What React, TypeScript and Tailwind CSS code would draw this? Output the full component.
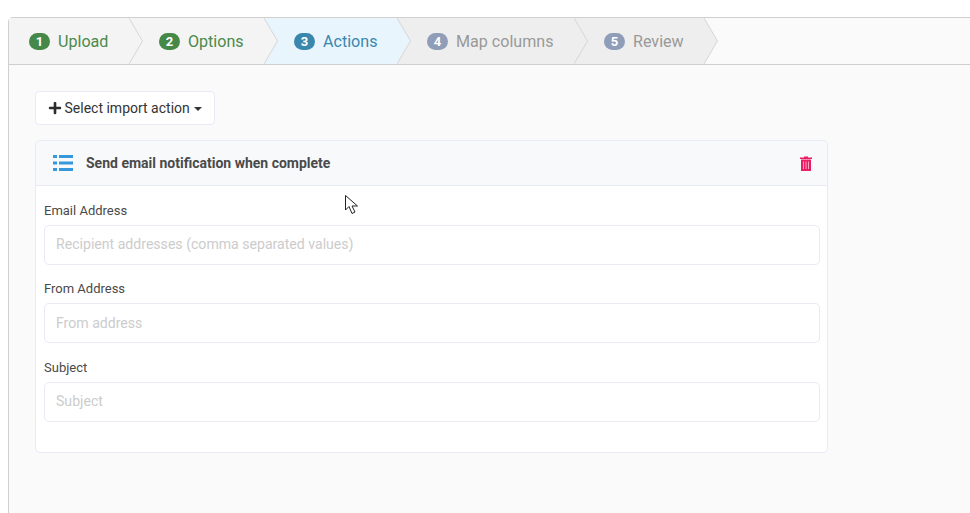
import { FaPlus } from "react-icons/fa";

const steps = [
  { n: 1, label: "Upload", width: "w-[120px]", pad: "pl-5", bg: "bg-[#f4f4f4]", fill: "#f4f4f4", text: "text-[#4b8a4b]", badge: "bg-[#468847]", z: "z-50" },
  { n: 2, label: "Options", width: "w-[135px]", pad: "pl-[30px]", bg: "bg-[#f4f4f4]", fill: "#f4f4f4", text: "text-[#4b8a4b]", badge: "bg-[#468847]", z: "z-40" },
  { n: 3, label: "Actions", width: "w-[133px]", pad: "pl-[30px]", bg: "bg-[#e9f5fd]", fill: "#e9f5fd", text: "text-[#3a87ad]", badge: "bg-[#3a87ad]", z: "z-30" },
  { n: 4, label: "Map columns", width: "w-[177px]", pad: "pl-[30px]", bg: "bg-[#eeeeee]", fill: "#eeeeee", text: "text-[#999999]", badge: "bg-[#8f9db8]", z: "z-20" },
  { n: 5, label: "Review", width: "w-[130px]", pad: "pl-[30px]", bg: "bg-[#eeeeee]", fill: "#eeeeee", text: "text-[#999999]", badge: "bg-[#8f9db8]", z: "z-10" },
];

const fields = [
  { label: "Email Address", placeholder: "Recipient addresses (comma separated values)" },
  { label: "From Address", placeholder: "From address" },
  { label: "Subject", placeholder: "Subject" },
];

export default function App() {
  return (
    <div className="relative h-[513px] overflow-hidden bg-white pl-2 pt-[17px] font-['Roboto',sans-serif]">
      <div className="h-[520px] rounded-tl-[5px] border-l border-t border-[#d0d0d0] bg-[#fafafa]">
        {/* wizard steps */}
        <div className="flex h-[47px] border-b border-[#cfcfcf]">
          {steps.map((step) => (
            <div key={step.n} className={`relative flex items-center ${step.width} ${step.pad} ${step.bg} ${step.z}`}>
              <span className={`flex h-[17px] w-[21px] items-center justify-center rounded-full text-[13px] font-bold leading-none text-white ${step.badge}`}>
                {step.n}
              </span>
              <span className={`ml-2 mt-0.5 text-[16.1px] leading-none ${step.text}`}>{step.label}</span>
              <svg className="absolute left-full top-0 h-[46px] w-[14px]" viewBox="0 0 14 46">
                <path d="M0 0 L13.5 23 L0 46 Z" fill={step.fill} />
                <path d="M0 0 L13.5 23 L0 46" fill="none" stroke="#d6d6d6" />
              </svg>
            </div>
          ))}
        </div>

        <div className="pl-[26px] pt-[26px]">
          <button className="flex h-[34px] w-[180px] items-center rounded border border-[#e8ebf5] bg-white pl-3 text-sm text-[#333333]">
            <FaPlus className="mr-[2.5px] text-sm text-[#2b2b2b]" />
            Select import action
            <span className="ml-1 mt-0.5 border-x-4 border-t-4 border-x-transparent border-t-[#333333]" />
          </button>

          <div className="mt-[15px] h-[313px] w-[793px] rounded-[5px] border border-[#e8ebf5] bg-white">
            <div className="flex h-[45px] items-center rounded-t-[5px] border-b border-[#e8ebf5] bg-[#f8f9fb] pl-[17px] pr-[15px]">
              <svg className="h-4 w-5" viewBox="0 0 20 16" fill="#3498db">
                <rect x="0" y="0" width="4" height="3" />
                <rect x="0" y="6.5" width="4" height="3" />
                <rect x="0" y="13" width="4" height="3" />
                <rect x="6" y="0" width="14" height="3" />
                <rect x="6" y="6.5" width="14" height="3" />
                <rect x="6" y="13" width="14" height="3" />
              </svg>
              <span className="ml-[13px] text-sm font-bold text-[#4a4a4a]">Send email notification when complete</span>
              <svg className="ml-auto h-[15px] w-3" viewBox="0 0 12 15">
                <path d="M4 0.5 H8 V1.5 H12 V3 H0 V1.5 H4 Z" fill="#e91e63" />
                <path d="M1 3.5 H11 V15 H1 Z" fill="#e91e63" />
                <path d="M3 5.5 H4 V13 H3 Z M5.5 5.5 H6.5 V13 H5.5 Z M8 5.5 H9 V13 H8 Z" fill="#f8a0bd" />
              </svg>
            </div>
            <div className="pl-2 pr-[7px] pt-[15.6px]">
              {fields.map((field) => (
                <div key={field.label} className="mb-[15.6px]">
                  <label className="block h-[23px] text-[13px] leading-[18px] text-[#4a4a4a]">{field.label}</label>
                  <input
                    placeholder={field.placeholder}
                    className="h-10 w-full rounded-[5px] border border-[#e8ebf5] bg-white px-[11px] pb-px text-[14.1px] outline-none placeholder:text-[#cccccc]"
                  />
                </div>
              ))}
            </div>
          </div>
        </div>
      </div>

      {/* mouse cursor */}
      <svg className="absolute left-[345px] top-[195px] h-[20px] w-[14px]" viewBox="0 0 14 20">
        <path d="M0.5 0.5 L0.5 15 L4 11.5 L7 18.5 L10 17 L7 11 L12.5 11 Z" fill="#ffffff" stroke="#222222" />
      </svg>
    </div>
  );
}
